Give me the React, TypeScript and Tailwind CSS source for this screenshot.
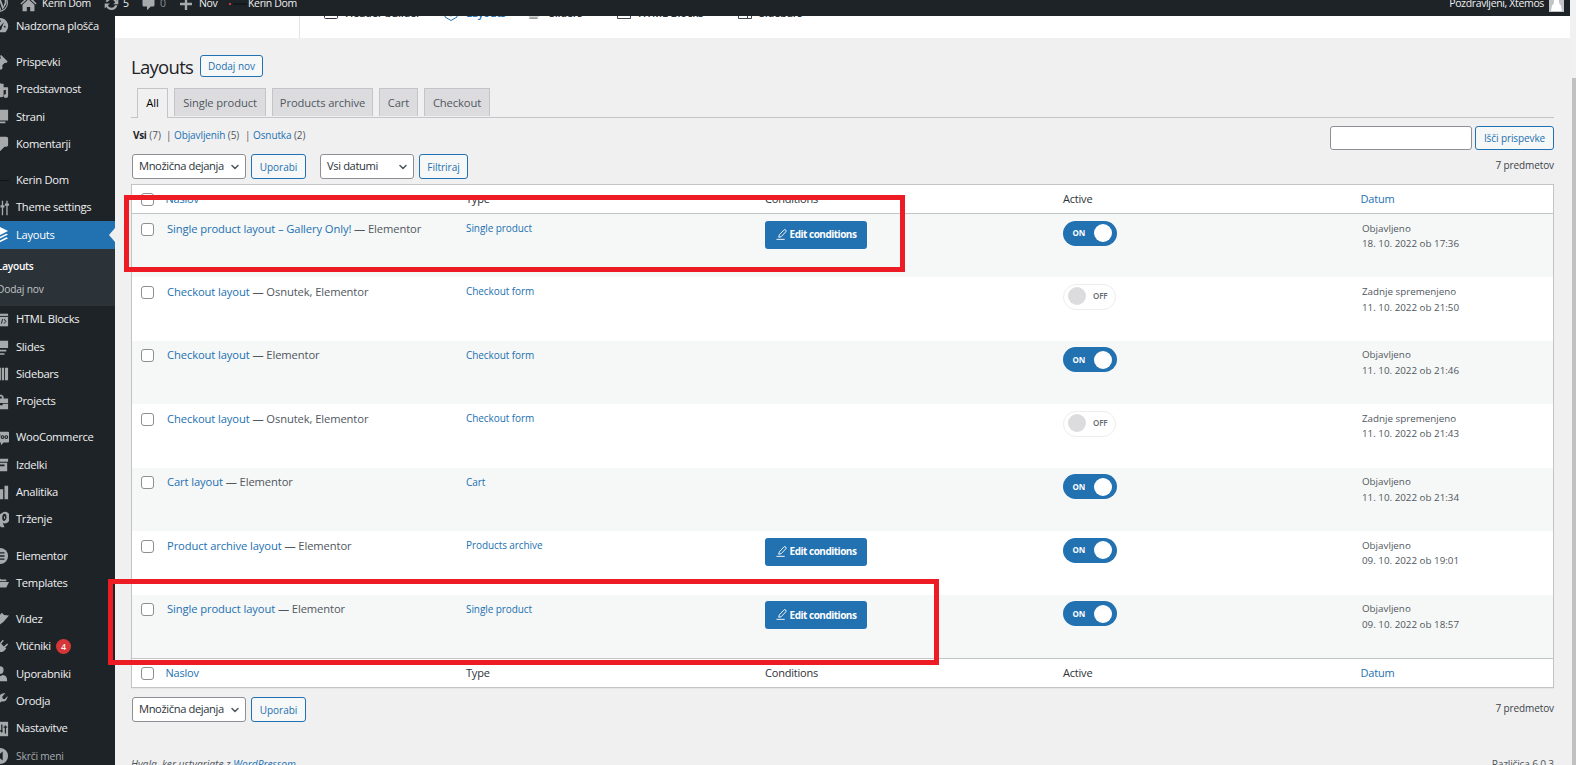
import type { ReactNode } from "react";
import { ChevronDown } from "lucide-react";

interface MenuItem {
  label: string;
  icon: ReactNode;
  gap?: boolean;
  badge?: number;
}

interface LayoutRow {
  title: string;
  state: string;
  type: string;
  conditions?: boolean;
  active: boolean;
  status: string;
  date: string;
}

const menuTop: MenuItem[] = [
  { label: "Nadzorna plošča", icon: <path fillRule="evenodd" d="M10 1a9 9 0 0 1 7.8 13.5c-.6 1-1.300 1.800-1.800 2.500H4A9 9 0 0 1 10 1zm0 2.500a1 1 0 1 0 0 2 1 1 0 0 0 0-2zm4.500 2l-4.800 5.500a1.800 1.800 0 1 0 2 1.500zm.8 4.300a1 1 0 1 0 0 2 1 1 0 0 0 0-2z" /> },
  { label: "Prispevki", icon: <path d="M11 2l7.500 7.500-1.500 1.500-1.500-.3-3 3 .3 3.300-1.800 1.800-3.400-3.400L2 19l4.700-5.700-3.300-3.300 1.400-1.400 3 .3L11 5.700l-.8-2.200z" />, gap: true },
  { label: "Predstavnost", icon: <path fillRule="evenodd" d="M2 2h8l1 1h3v4h5v10q0 2-2.500 2T14 17t2.500-2.500V10H14v6q0 2-2.500 2T9 16H2z" /> },
  { label: "Strani", icon: <path d="M6 14V2h13v12zM4 5h1v10h11v2H4z" /> },
  { label: "Komentarji", icon: <path d="M5 2h12q2 0 2 2v7q0 2-2 2h-2l-5 5v-5H5q-2 0-2-2V4q0-2 2-2z" /> },
  { label: "Kerin Dom", icon: <path className="fill-[#111417]" d="M0 9h20v1H0z" />, gap: true },
  { label: "Theme settings", icon: <path d="M12 2h1.500v5H15v2.500h-1.500V18H12V9.500h-1.500V7H12zM17 2h1.500v3H20v2.500h-1.500V18H17V7.500h-1.500V5H17z" /> },
];

const menuBottom: MenuItem[] = [
  { label: "HTML Blocks", icon: <><path d="M2 3h17v14H2z" /><path d="M2 6h17M9 9l-2 2.500 2 2.500M14.500 9l2 2.500-2 2.500M13 9l-1.500 5" fill="none" stroke="#1d2327" strokeWidth="1.100" /></> },
  { label: "Slides", icon: <path d="M2 3h17v8H2zM6 13h11v2H6zM9 17h6v1.500H9z" /> },
  { label: "Sidebars", icon: <path d="M2 3h9v14H2zM12 3h2.500v14H12zM15.500 3H19v14h-3.500z" /> },
  { label: "Projects", icon: <path fillRule="evenodd" d="M7 6V3q0-1 1-1h4l2 2v2h5v5H2V6zm2 0h3V4H9zM2 12h8v1.500h3V12h6v6H2z" /> },
  { label: "WooCommerce", icon: <><path d="M2 3h17q1 0 1 1v10q0 1-1 1h-5l-3 3v-3H2z" /><g fill="none" stroke="#1d2327" strokeWidth="1.200"><path d="M5 6l1 5 2-4 1 4 1-5" /><circle cx="12.800" cy="9" r="1.500" /><circle cx="17" cy="9" r="1.500" /></g></>, gap: true },
  { label: "Izdelki", icon: <path fillRule="evenodd" d="M1 3h18v3.500H1zM2 7.500h16V17H2zm5 2v2h8v-2z" /> },
  { label: "Analitika", icon: <path d="M4 10h4v8H4zM10 7h3.500v11H10zM15 3h4v15h-4z" /> },
  { label: "Trženje", icon: <path fillRule="evenodd" d="M14 1a5.500 6.500 0 1 1-1 12l2 5h-4l-3-5H3V5h5zm1 2c-3 0-3.500 8-.5 8s4-8 .5-8zm-.5 2.500c1.500 0 1.500 3.500 0 3.500z" /> },
  { label: "Elementor", icon: <><circle cx="10" cy="10" r="9" /><path d="M7 6v8M10 6.500h5M10 10h5M10 13.500h5" stroke="#1d2327" strokeWidth="1.500" /></>, gap: true },
  { label: "Templates", icon: <path d="M2 4h7l2 2h6v2H5l-3 5zM6 9h14l-3 6H3z" /> },
  { label: "Videz", icon: <path d="M12 2l2.500 2.500L20 5l-6 7-4 3-5-5zM5 12l4 4-5 2-3 1z" />, gap: true },
  { label: "Vtičniki", badge: 4, icon: <path d="M13 2l1.300 1-3 3.500 3 3L18 6l1 1.300-3.200 3.200 1.200 1.300-2 2q-3 3-6 1L5 19l-2-2 3.500-4q-1-3 2-6l2-2z" /> },
  { label: "Uporabniki", icon: <path d="M6 5.500a4 4 0 1 1 8 0 4 4.500 0 0 1-8 0zM2 18q0-7 5-7l3 1.500 3-1.500q5 0 5 7z" /> },
  { label: "Orodja", icon: <path d="M18.500 4.500L15 8l-2-.5L12.500 5 16 1.500q-5-1-7 3.500v3l-8 8 2.500 2.500 8-8q6.500 1 7-6z" /> },
  { label: "Nastavitve", icon: <><path d="M1 2h18v16H1z" /><path d="M4 12h4M10 12h3M12 5v9M16 15V6M14 8h4" stroke="#1d2327" strokeWidth="1.400" /></> },
];

const layoutsIcon = (
  <path d="M10 1l9 4.500L10 10 1 5.500zM10 12l7-3.500 2 1-9 4.500-9-4.500 2-1zM10 16l7-3.500 2 1-9 4.500-9-4.500 2-1z" />
);

const tabs = [
  { label: "All", width: "w-[31px]" },
  { label: "Single product", width: "w-[92px]" },
  { label: "Products archive", width: "w-[101px]" },
  { label: "Cart", width: "w-[39px]" },
  { label: "Checkout", width: "w-[66px]" },
];

const rows: LayoutRow[] = [
  { title: "Single product layout – Gallery Only!", state: "Elementor", type: "Single product", conditions: true, active: true, status: "Objavljeno", date: "18. 10. 2022 ob 17:36" },
  { title: "Checkout layout", state: "Osnutek, Elementor", type: "Checkout form", active: false, status: "Zadnje spremenjeno", date: "11. 10. 2022 ob 21:50" },
  { title: "Checkout layout", state: "Elementor", type: "Checkout form", active: true, status: "Objavljeno", date: "11. 10. 2022 ob 21:46" },
  { title: "Checkout layout", state: "Osnutek, Elementor", type: "Checkout form", active: false, status: "Zadnje spremenjeno", date: "11. 10. 2022 ob 21:43" },
  { title: "Cart layout", state: "Elementor", type: "Cart", active: true, status: "Objavljeno", date: "11. 10. 2022 ob 21:34" },
  { title: "Product archive layout", state: "Elementor", type: "Products archive", conditions: true, active: true, status: "Objavljeno", date: "09. 10. 2022 ob 19:01" },
  { title: "Single product layout", state: "Elementor", type: "Single product", conditions: true, active: true, status: "Objavljeno", date: "09. 10. 2022 ob 18:57" },
];

const columns = "grid grid-cols-[35px_299px_299px_298px_299px_1fr]";

function MenuIcon({ children, className = "fill-[#a7aaad]" }: { children: ReactNode; className?: string }) {
  return (
    <svg viewBox="0 0 20 20" className={`size-[18px] shrink-0 -ml-[9px] mr-[7px] ${className}`}>
      {children}
    </svg>
  );
}

function MenuRow({ item }: { item: MenuItem }) {
  return (
    <li className={`flex h-[27.3px] items-center ${item.gap ? "mt-[9px]" : ""}`}>
      <MenuIcon>{item.icon}</MenuIcon>
      <span>{item.label}</span>
      {item.badge && (
        <span className="ml-[5px] flex size-[15px] items-center justify-center rounded-full bg-[#d63638] text-[9px] font-semibold">
          {item.badge}
        </span>
      )}
    </li>
  );
}

function Sidebar() {
  return (
    <nav className="w-[115px] shrink-0 overflow-hidden bg-[#1d2327] text-[11.200px] font-medium tracking-[-0.3px] whitespace-nowrap text-[#f0f0f1]">
      <ul className="-mt-[3.600px]">
        {menuTop.map((item) => (
          <MenuRow key={item.label} item={item} />
        ))}
        <li className="flex h-[27.700px] items-center bg-[#2271b1] text-white">
          <MenuIcon className="fill-white">{layoutsIcon}</MenuIcon>
          <span className="grow">Layouts</span>
          <svg viewBox="0 0 6 14" className="h-[14px] w-[6px] fill-[#f0f0f1]">
            <path d="M6 0v14L0 7z" />
          </svg>
        </li>
        <li className="flex h-[56.800px] flex-col bg-[#2c3338] pt-[6px] text-[10.200px] leading-[23px]">
          <span className="-ml-[3px] font-semibold tracking-[-0.3px] text-white">Layouts</span>
          <span className="-ml-[3px] font-normal tracking-[-0.15px] text-[#c3c4c7]">Dodaj nov</span>
        </li>
        {menuBottom.map((item) => (
          <MenuRow key={item.label} item={item} />
        ))}
        <li className="flex h-[28px] items-center text-[10.300px] font-normal tracking-[-0.2px] text-[#a7aaad]">
          <MenuIcon>
            <path fillRule="evenodd" d="M10 1a9 9 0 1 1 0 18 9 9 0 0 1 0-18zm3 4l-6 5 6 5z" />
          </MenuIcon>
          <span>Skrči meni</span>
        </li>
      </ul>
    </nav>
  );
}

function AdminBar() {
  return (
    <header className="h-[16px] w-[1570px] shrink-0 overflow-hidden bg-[#1d2327] text-[10.500px] font-medium tracking-[-0.35px] text-[#f0f0f1]">
      <div className="-mt-[10px] flex h-[28px] items-center whitespace-nowrap">
        <svg viewBox="0 0 20 20" className="-mt-[2px] -ml-[10px] size-[18px] fill-[#a7aaad]">
          <path fillRule="evenodd" d="M10 0a10 10 0 1 1 0 20 10 10 0 0 1 0-20zm0 1.200a8.800 8.800 0 1 0 0 17.600 8.800 8.800 0 0 0 0-17.600zM2.800 7L7 17.500A8 8 0 0 1 2.800 7zM10 11l2.500 6.800a8 8 0 0 1-4.700.1zM6 6h6l3 8 1.500-5q0-2-1-3.500T16 3q3 3 2 8l-4 6.500L11 9z" />
        </svg>
        <svg viewBox="0 0 20 20" className="-mt-[2px] ml-[12px] size-[17px] fill-[#a7aaad]">
          <path d="M10 1l3.500 3.300V3H16v3.500l3.500 3.500-1.200 1.200L10 3.500l-8.300 7.700L.5 10zM3 11.500l7-6.500 7 6.500V19h-5v-5H8v5H3z" />
        </svg>
        <span className="ml-[5px] w-[61px]">Kerin Dom</span>
        <svg viewBox="0 0 20 20" className="-mt-[1px] size-[17px] fill-[#a7aaad]">
          <path d="M10 3q4 0 6 3.500L18 5v6h-6l2.300-2.300Q13 5.500 10 5.500 7 5.500 5.800 8H3q2-5 7-5zM2 10h6l-2.300 2.300Q7 15 10 15t4.200-3H17q-1.500 5.500-7 5.500-4 0-6-3.500L2 15.500z" />
        </svg>
        <span className="ml-[3px] w-[18px]">5</span>
        <svg viewBox="0 0 20 20" className="-mt-[1px] size-[15px] fill-[#a7aaad]">
          <path d="M4 2h12q2 0 2 2v8q0 2-2 2h-3l-5 5v-5H4q-2 0-2-2V4q0-2 2-2z" />
        </svg>
        <span className="ml-[4px] w-[20px] text-[#8c8f94]">0</span>
        <svg viewBox="0 0 12 12" className="-mt-[1px] size-[12px] fill-[#a7aaad]">
          <path d="M4.800 0h2.400v4.800H12v2.400H7.200V12H4.800V7.200H0V4.800h4.800z" />
        </svg>
        <span className="ml-[7px] w-[30px]">Nov</span>
        <svg viewBox="0 0 18 4" className="-mt-[1px] h-[4px] w-[18px]">
          <path d="M0 1h2v2H0z" fill="#d63638" />
          <path d="M4 1.500h14v1H4z" fill="#0b0e10" />
        </svg>
        <span className="ml-[1px]">Kerin Dom</span>
        <span className="ml-auto">Pozdravljeni, Xtemos</span>
        <svg viewBox="0 0 15 15" className="mr-[6px] ml-[5px] size-[15px]">
          <path d="M0 0h15v15H0z" fill="#c3c4c7" />
          <path d="M5 1h5v4q0 2 2 3.500l1 5.500H2l1-5.500q2-1.500 2-3.500z" fill="#fff" />
        </svg>
      </div>
    </header>
  );
}

// Theme navigation, mostly scrolled away under the admin bar
function ThemeNav() {
  return (
    <div className="flex h-[22px] shrink-0 overflow-hidden bg-white text-[11px] font-semibold whitespace-nowrap text-[#2c3338]">
      <div className="h-full w-[185px] border-r border-[#e2e4e7]" />
      <div className="-mt-[12px] flex h-[16px] items-center">
        <svg viewBox="0 0 14 14" className="ml-[24px] size-[14px] fill-none stroke-[#3c2a45]">
          <rect x=".5" y=".5" width="13" height="13" rx="1" />
        </svg>
        <span className="ml-[7px] w-[99px] pt-[2px] tracking-[-0.3px]">Header builder</span>
        <svg viewBox="0 0 14 16" className="mt-[1px] h-[16px] w-[14px] fill-none stroke-[#2271b1]">
          <path d="M7 1l6 3-6 3-6-3zM1 8v4l6 3.500 6-3.500V8M1 8l6 3 6-3" />
        </svg>
        <span className="ml-[8px] w-[62px] pt-[2px] tracking-[-0.3px] text-[#2271b1]">Layouts</span>
        <svg viewBox="0 0 12 14" className="h-[13px] w-[12px] fill-none stroke-[#3c434a]">
          <path d="M.5 1.500h11v9H.5zM1 13h9" />
        </svg>
        <span className="ml-[9px] w-[68px] pt-[2px] tracking-[-0.3px]">Sliders</span>
        <svg viewBox="0 0 14 14" className="size-[14px] fill-none stroke-[#3c434a]">
          <path d="M.5.5h13v13H.5zM5 8l-1 1.500L5 11M9 8l1 1.500L9 11" />
        </svg>
        <span className="ml-[7px] w-[100px] pt-[2px] tracking-[-0.2px]">HTML Blocks</span>
        <svg viewBox="0 0 14 14" className="size-[14px] fill-none stroke-[#3c434a]">
          <path d="M.5.5h13v13H.5zM9.500.5v13" />
        </svg>
        <span className="ml-[7px] pt-[2px] tracking-[-0.3px]">Sidebars</span>
      </div>
    </div>
  );
}

function Button({ children, className }: { children: ReactNode; className: string }) {
  return (
    <button className={`flex items-center justify-center rounded-[3px] border border-[#2271b1] bg-[#f6f7f7] pt-px text-[10px] text-[#2271b1] ${className}`}>
      {children}
    </button>
  );
}

function Select({ label, className }: { label: string; className: string }) {
  return (
    <button className={`flex h-[25px] items-center justify-between rounded-[3px] border border-[#8c8f94] bg-white pr-[4px] pl-[6px] text-[11.200px] tracking-[-0.4px] text-[#2c3338] ${className}`}>
      <span className="-mt-px whitespace-nowrap">{label}</span>
      <ChevronDown className="size-[12px] shrink-0 text-[#50575e]" strokeWidth={3} />
    </button>
  );
}

function Checkbox({ className }: { className: string }) {
  return <span className={`block size-[13px] rounded-[3px] border border-[#8c8f94] bg-white ${className}`} />;
}

function HeadRow({ className = "" }: { className?: string }) {
  return (
    <div className={`${columns} h-[29px] border-[#c3c4c7] text-[11px] leading-[27px] tracking-[-0.2px] text-[#2c3338] ${className}`}>
      <Checkbox className="mt-[8px] ml-[9px]" />
      <span className="-ml-[1.500px] text-[#2271b1]">Naslov</span>
      <span>Type</span>
      <span>Conditions</span>
      <span>Active</span>
      <span className="-ml-[1.500px] text-[#2271b1]">Datum</span>
    </div>
  );
}

function Toggle({ on }: { on: boolean }) {
  if (!on) {
    return (
      <span className="mt-[6.500px] flex h-[26px] w-[53px] items-center gap-[7px] rounded-full border border-[#ededee] bg-white pb-px pl-[4px] text-[8px] font-semibold tracking-[-0.1px] text-[#646970]">
        <span className="size-[18px] rounded-full bg-[#dcdcde]" />
        OFF
      </span>
    );
  }
  return (
    <span className="mt-[6.500px] flex h-[25px] w-[54px] items-center justify-between rounded-full bg-[#2271b1] pr-[5px] pl-[9.500px] text-[8px] font-bold tracking-[-0.1px] text-white">
      ON
      <span className="size-[18px] rounded-full bg-white" />
    </span>
  );
}

function Row({ row, striped }: { row: LayoutRow; striped: boolean }) {
  return (
    <div className={`${columns} h-[63.430px] text-[10px] text-[#50575e] ${striped ? "bg-[#f6f7f7]" : "bg-white"}`}>
      <Checkbox className="mt-[8.500px] ml-[9px]" />
      <p className="pt-[5.500px] text-[11.200px] leading-[18px] font-medium tracking-[-0.1px] whitespace-nowrap">
        <span className="text-[#2271b1]">{row.title}</span> — {row.state}
      </p>
      <p className="pt-[6px] leading-[16px] tracking-[-0.08px] text-[#2271b1]">{row.type}</p>
      <div>
        {row.conditions && (
          <button className="mt-[6.500px] flex h-[28px] w-[102px] items-center justify-center gap-[3px] rounded-[3px] bg-[#2271b1] text-[10px] font-bold tracking-[-0.5px] text-white">
            <svg viewBox="0 0 12 12" className="-mt-px size-[11px] fill-none stroke-white">
              <path d="M.5 11.300h9M3 9l.5-2.500L8.700 1q1-.8 2 .2t0 1.900L5.500 8.500z" />
            </svg>
            Edit conditions
          </button>
        )}
      </div>
      <div>
        <Toggle on={row.active} />
      </div>
      <p className="pt-[6.500px] text-[9.800px] leading-[15.600px]">
        {row.status}
        <br />
        {row.date}
      </p>
    </div>
  );
}

function Layouts() {
  return (
    <main className="flex grow flex-col pr-[16px] pl-[16px]">
      <div className="mt-[17px] flex h-[22px] items-center">
        <h1 className="w-[69px] pt-px text-[18.500px] tracking-[-0.7px] text-[#1d2327]">Layouts</h1>
        <Button className="h-[22px] w-[63px] font-medium">Dodaj nov</Button>
      </div>
      <div className="mt-[11px] flex h-[30px] shrink-0 gap-[6px] border-b border-[#c3c4c7] pl-[6px]">
        {tabs.map((tab, i) => (
          <button
            key={tab.label}
            className={`flex items-center justify-center border border-b-0 border-[#c3c4c7] text-[11.200px] font-medium tracking-[-0.1px] whitespace-nowrap ${tab.width} ${
              i === 0 ? "h-[30px] bg-[#f0f0f1] text-black" : "h-[28px] bg-[#dcdcde] pt-px text-[#50575e]"
            }`}
          >
            {tab.label}
          </button>
        ))}
      </div>
      <div className="flex h-[36px] shrink-0 justify-between">
        <p className="flex pt-[9px] pl-[2px] text-[10px] leading-[17px] whitespace-nowrap text-[#50575e]">
          <span className="w-[33px]">
            <b className="font-bold tracking-[-0.3px] text-[#1d2327]">Vsi</b> (7)
          </span>
          <span className="w-[8px]">|</span>
          <span className="w-[71px] tracking-[-0.1px]">
            <span className="text-[#2271b1]">Objavljenih</span> (5)
          </span>
          <span className="w-[8px]">|</span>
          <span className="tracking-[-0.1px]">
            <span className="text-[#2271b1]">Osnutka</span> (2)
          </span>
        </p>
        <div className="flex gap-[3px] pt-[8px]">
          <input className="h-[24px] w-[142px] rounded-[3px] border border-[#8c8f94] bg-white" />
          <Button className="h-[24px] w-[79px] tracking-[-0.1px]">Išči prispevke</Button>
        </div>
      </div>
      <div className="flex h-[30px] shrink-0 pl-[1px]">
        <Select className="w-[114px]" label="Množična dejanja" />
        <Button className="ml-[5px] h-[25px] w-[55px]">Uporabi</Button>
        <Select className="ml-[14px] w-[94px]" label="Vsi datumi" />
        <Button className="ml-[5px] h-[25px] w-[49px]">Filtriraj</Button>
        <span className="ml-auto pt-[4px] text-[10px] tracking-[-0.1px] text-[#3c434a]">7 predmetov</span>
      </div>
      <section className="h-[504px] shrink-0 border border-[#c3c4c7] bg-white shadow-[0_1px_1px_rgba(0,0,0,.04)]">
        <HeadRow className="border-b" />
        {rows.map((row, i) => (
          <Row key={row.date} row={row} striped={i % 2 === 0} />
        ))}
        <HeadRow className="border-t" />
      </section>
      <div className="mt-[9px] flex shrink-0 pl-[1px]">
        <Select className="w-[114px]" label="Množična dejanja" />
        <Button className="ml-[5px] h-[25px] w-[55px]">Uporabi</Button>
        <span className="ml-auto pt-[4px] text-[10px] tracking-[-0.1px] text-[#3c434a]">7 predmetov</span>
      </div>
      <footer className="mt-[33px] flex shrink-0 justify-between text-[10.200px] leading-[18px] text-[#50575e]">
        <p className="italic">
          Hvala, ker ustvarjate z <span className="text-[#2271b1]">WordPressom</span>.
        </p>
        <p className="tracking-[-0.2px]">Različica 6.0.3</p>
      </footer>
    </main>
  );
}

export default function App() {
  return (
    <div className="relative flex h-[765px] w-[1576px] overflow-hidden bg-[#f0f0f1] font-['Open_Sans','Noto_Sans',sans-serif]">
      <div className="flex w-[1570px] shrink-0 flex-col">
        <AdminBar />
        <div className="flex min-h-0 grow">
          <Sidebar />
          <div className="flex w-[1455px] flex-col overflow-hidden">
            <ThemeNav />
            <Layouts />
          </div>
        </div>
      </div>
      <div className="flex grow flex-col bg-[#f1f1f1] pt-[78px] pl-[2px]">
        <div className="grow bg-[#c1c1c1]" />
      </div>

      {/* highlight frames drawn over the table */}
      <div className="absolute top-[195px] left-[124px] h-[77px] w-[781px] border-5 border-[#ed1c24]" />
      <div className="absolute top-[579px] left-[108px] h-[86px] w-[831px] border-5 border-[#ed1c24]" />
    </div>
  );
}
